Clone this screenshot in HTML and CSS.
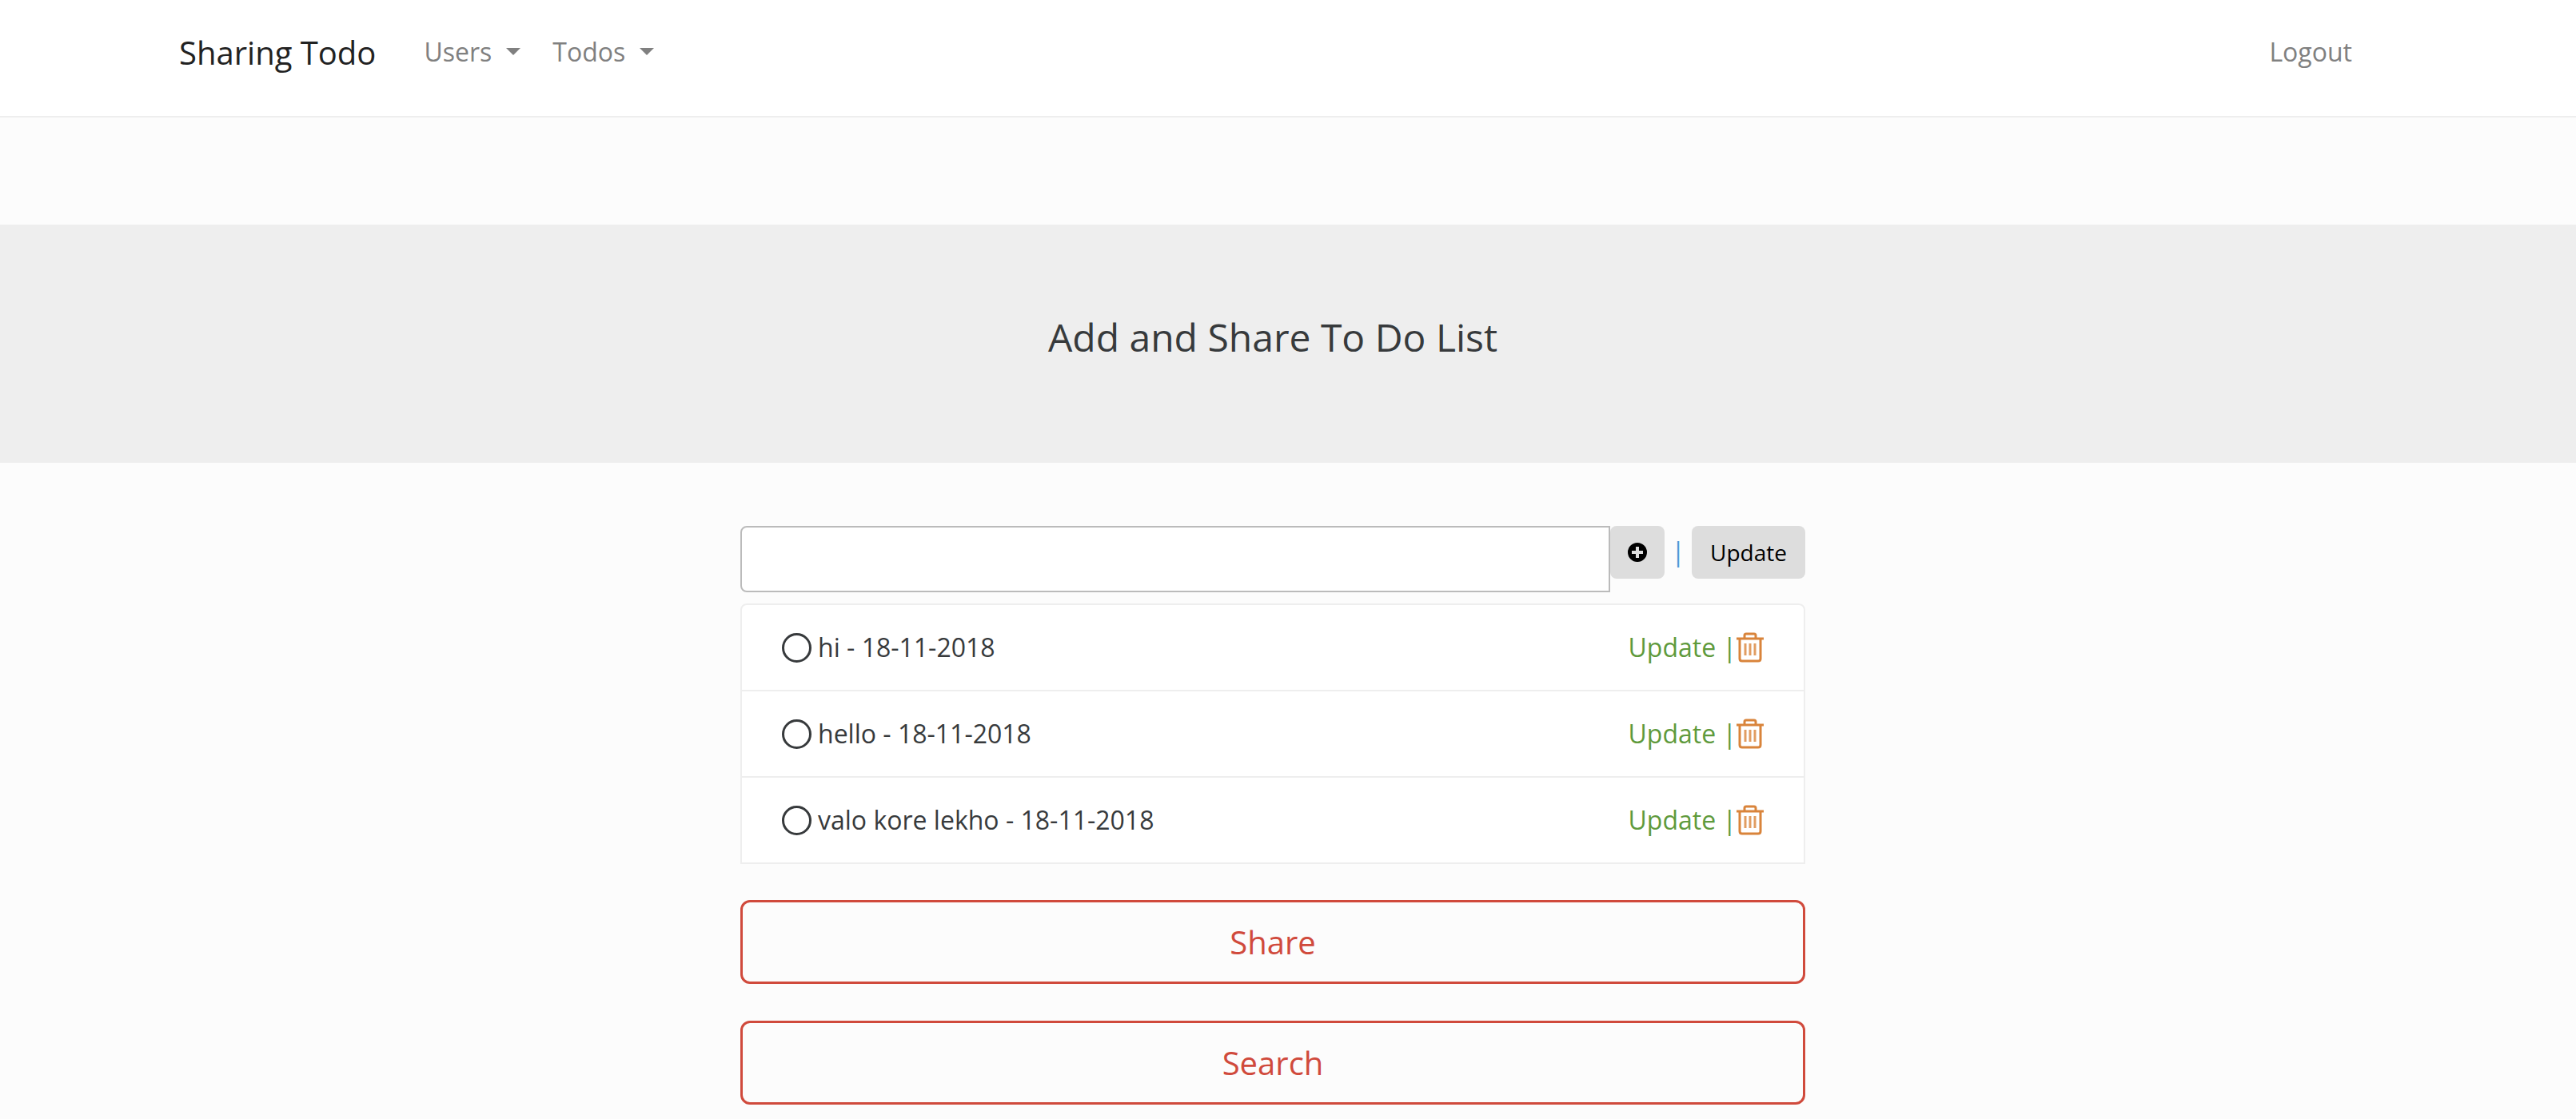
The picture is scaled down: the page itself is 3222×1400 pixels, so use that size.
FILE: index.html
```html
<!DOCTYPE html>
<html lang="en">
<head>
<meta charset="utf-8">
<meta name="viewport" content="width=device-width, initial-scale=1">
<title>Sharing Todo</title>
<link rel="stylesheet" href="styles.css">
</head>
<body>
<svg class="sprite" aria-hidden="true">
  <symbol id="trash" viewBox="0 0 34 38">
    <path d="M0 8h34M10 7V4q0-2 2-2h10q2 0 2 2v3M4 8v25q0 3 3 3h20q3 0 3-3V8" fill="none" stroke="currentColor" stroke-width="3"/>
    <path d="M11 14v15M17 14v15M23 14v15" fill="none" stroke="currentColor" stroke-width="3" opacity=".8"/>
  </symbol>
</svg>
<header class="navbar">
  <nav class="navbar-inner">
    <a class="brand" href="#">Sharing Todo</a>
    <a class="nav-link dropdown" href="#">Users</a>
    <a class="nav-link dropdown" href="#">Todos</a>
    <a class="nav-link logout" href="#">Logout</a>
  </nav>
</header>
<section class="banner">
  <h1>Add and Share To Do List</h1>
</section>
<main class="content">
  <form class="add-form">
    <input class="todo-input" type="text" aria-label="New to do">
    <button class="btn btn-add" type="button" aria-label="Add">
      <svg width="24" height="24" viewBox="0 0 24 24"><path fill="currentColor" fill-rule="evenodd" d="M12 0a12 12 0 1 0 0 24a12 12 0 1 0 0-24zM10 5h4v5h5v4h-5v5h-4v-5H5v-4h5z"/></svg>
    </button>
    <span class="divider">|</span>
    <button class="btn btn-update" type="button">Update</button>
  </form>
  <ul class="todo-list">
    <li class="todo">
      <input class="todo-check" type="radio" id="todo-1"><label for="todo-1">hi - 18-11-2018</label>
      <span class="actions"><a class="edit" href="#">Update |</a><a class="delete" href="#" aria-label="Delete"><svg class="icon"><use href="#trash"/></svg></a></span>
    </li>
    <li class="todo">
      <input class="todo-check" type="radio" id="todo-2"><label for="todo-2">hello - 18-11-2018</label>
      <span class="actions"><a class="edit" href="#">Update |</a><a class="delete" href="#" aria-label="Delete"><svg class="icon"><use href="#trash"/></svg></a></span>
    </li>
    <li class="todo">
      <input class="todo-check" type="radio" id="todo-3"><label for="todo-3">valo kore lekho - 18-11-2018</label>
      <span class="actions"><a class="edit" href="#">Update |</a><a class="delete" href="#" aria-label="Delete"><svg class="icon"><use href="#trash"/></svg></a></span>
    </li>
  </ul>
  <button class="btn-outline" type="button">Share</button>
  <button class="btn-outline" type="button">Search</button>
</main>
</body>
</html>
```
FILE: styles.css
```css
* {
  box-sizing: border-box;
}

body {
  margin: 0;
  background: #fcfcfc;
  color: #373a3c;
  font: 32px/48px "Open Sans", "Liberation Sans", sans-serif;
}

a {
  color: inherit;
  text-decoration: none;
}

.sprite {
  display: none;
}

.navbar {
  background: #fff;
  border-bottom: 2px solid #eee;
  padding: 36px 38px 49px 0;
}

.navbar-inner {
  display: flex;
  align-items: center;
  max-width: 2736px;
  height: 60px;
  margin: 0 auto;
}

.brand {
  color: #222;
  font-size: 40px;
  line-height: 60px;
  margin-right: 60px;
}

.nav-link {
  color: #808080;
  height: 50px;
  margin-right: 40px;
}

.dropdown::after {
  content: "";
  display: inline-block;
  margin-left: 18px;
  vertical-align: 8px;
  border: 9px solid transparent;
  border-top-color: currentColor;
  border-bottom: 0;
}

.logout {
  margin-left: auto;
  margin-right: 18px;
}

.banner {
  margin-top: 134px;
  padding: 104px 38px 120px 0;
  background: #eee;
}

.banner h1 {
  margin: 0;
  font-size: 48px;
  font-weight: 400;
  line-height: 74px;
  text-align: center;
}

.content {
  margin: 0 auto;
  padding: 79px 38px 20px 0;
  width: 100%;
  max-width: 1370px;
}

.add-form {
  display: flex;
  align-items: flex-start;
}

.todo-input {
  flex: 1;
  min-width: 0;
  height: 83px;
  padding: 8px 16px;
  border: 2px solid #bbb;
  border-radius: 8px 0 0 8px;
  background: #fff;
  font: inherit;
}

.btn {
  display: flex;
  align-items: center;
  justify-content: center;
  height: 66px;
  padding: 0 22px;
  border: 0;
  border-radius: 8px;
  background: #ddd;
  color: #000;
  font: inherit;
  font-size: 28px;
}

.btn-update {
  padding: 0 23px;
}

.divider {
  width: 34px;
  line-height: 64px;
  color: #4e9ad6;
  text-align: center;
}

.todo-list {
  margin: 14px 0 45px;
  padding: 0;
  list-style: none;
  background: #fff;
  border: 2px solid #eee;
  border-radius: 8px 8px 0 0;
}

.todo {
  display: flex;
  align-items: center;
  padding: 29px 50px;
}

.todo + .todo {
  border-top: 2px solid #eee;
}

.todo-check {
  appearance: none;
  width: 37px;
  height: 37px;
  margin: 0 8px 0 0;
  border: 3px solid #373a3c;
  border-radius: 50%;
}

.actions {
  display: flex;
  align-items: center;
  margin-left: auto;
}

.edit {
  color: #5f9a3c;
}

.delete {
  display: flex;
  color: #d9843b;
}

.icon {
  width: 34px;
  height: 38px;
}

.btn-outline {
  display: block;
  width: 100%;
  height: 105px;
  margin-bottom: 46px;
  border: 3px solid #d04a3c;
  border-radius: 12px;
  background: transparent;
  color: #d04a3c;
  font: inherit;
  font-size: 40px;
}

.btn-outline:last-child {
  margin-bottom: 0;
}
```
